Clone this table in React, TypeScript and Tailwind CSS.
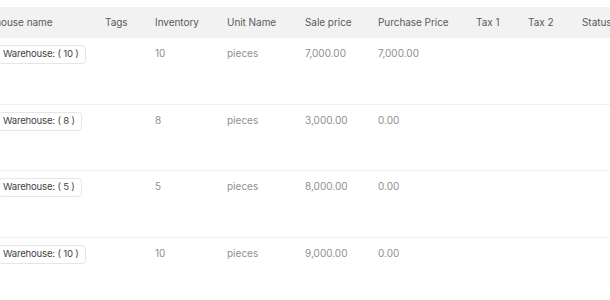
import React from 'react'

const cols = 'grid grid-cols-[134px_50px_72px_78px_73px_98px_52px_54px_90px]'

const headers = ['Warehouse name', 'Tags', 'Inventory', 'Unit Name', 'Sale price', 'Purchase Price', 'Tax 1', 'Tax 2', 'Status']

const rows = [
    { qty: '10', sale: '7,000.00', purchase: '7,000.00' },
    { qty: '8', sale: '3,000.00', purchase: '0.00' },
    { qty: '5', sale: '8,000.00', purchase: '0.00' },
    { qty: '10', sale: '9,000.00', purchase: '0.00' },
]

export default function App() {
    return (
        <div className="w-[610px] h-[300px] overflow-hidden bg-white pt-[7px] font-['Inter',sans-serif] text-[10px]">
            <div className="ml-[-29px] w-[720px]">
                {/* header */}
                <div className={`${cols} h-[31px] items-center bg-[#f2f2f2] text-[#5a5a5a] tracking-[-0.05px]`}>
                    {headers.map(h => (
                        <div key={h} className="whitespace-nowrap">{h}</div>
                    ))}
                </div>

                {rows.map((r, i) => (
                    <div key={i} className={`${cols} h-[66.5px] border-b border-[#f0f0f0] pt-[7px] text-[#8f8f8f]`}>
                        <div className="pl-[27px]">
                            <span className="inline-flex h-[19px] items-center rounded-[4px] border border-[#e6e6e6] pl-[4px] pr-[6px] text-[9.6px] tracking-[-0.2px] text-[#3f3f3f] whitespace-nowrap">
                                Warehouse: ( {r.qty} )
                            </span>
                        </div>
                        <div></div>
                        <div className="leading-[17px]">{r.qty}</div>
                        <div className="leading-[17px]">pieces</div>
                        <div className="leading-[17px]">{r.sale}</div>
                        <div className="leading-[17px]">{r.purchase}</div>
                        <div></div>
                        <div></div>
                        <div></div>
                    </div>
                ))}
            </div>
        </div>
    )
}
